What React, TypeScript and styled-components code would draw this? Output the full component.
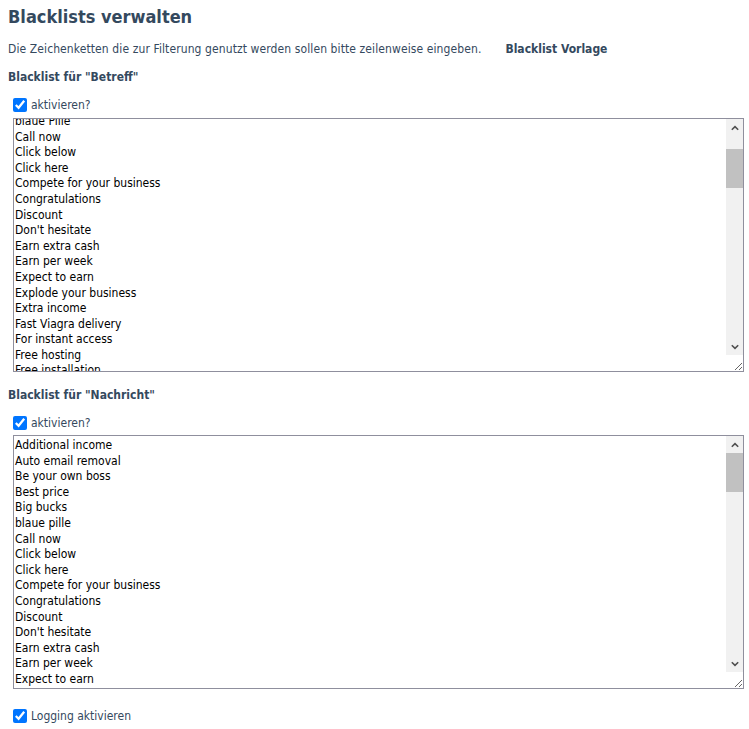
import { useLayoutEffect, useRef, useState } from "react";
import styled, { createGlobalStyle } from "styled-components";

const base = [
  "Additional income",
  "Auto email removal",
  "Be your own boss",
  "Best price",
  "Big bucks",
];

const rest = [
  "Call now",
  "Click below",
  "Click here",
  "Compete for your business",
  "Congratulations",
  "Discount",
  "Don't hesitate",
  "Earn extra cash",
  "Earn per week",
  "Expect to earn",
  "Explode your business",
  "Extra income",
  "Fast Viagra delivery",
  "For instant access",
  "Free hosting",
  "Free installation",
  "Free investment",
  "Free membership",
  "Free money",
  "Free offer",
  "Free preview",
  "Free quote",
  "Free sample",
  "Free trial",
  "Full refund",
  "Get it now",
  "Get out of debt",
  "Get paid",
  "Gift certificate",
  "Great offer",
  "Guaranteed",
  "Hidden assets",
  "Home based",
  "Increase sales",
  "Increase traffic",
  "Incredible deal",
  "Info you requested",
  "Investment",
  "Join millions",
  "Limited time",
  "Lose weight",
  "Lower interest rate",
  "Lowest price",
  "Luxury car",
  "Make money",
  "Million dollars",
  "Miracle",
  "Money back",
  "No catch",
  "No cost",
  "No credit check",
  "No fees",
  "No gimmick",
  "No hidden costs",
  "Offer expires",
  "Once in a lifetime",
  "One time",
  "Online pharmacy",
  "Only $",
  "Order now",
  "Please read",
  "Potenzmittel",
  "Prize",
  "Pure profit",
  "Risk-free",
  "Satisfaction guaranteed",
  "Save big money",
  "Special promotion",
  "This is not spam",
  "Unsecured credit",
  "Urgent",
  "Viagra",
  "What are you waiting for",
  "Winner",
  "Work from home",
  "You have been selected",
  "You're a winner",
];

const subjectList = [...base, "blaue Pille", ...rest].join("\n");
const messageList = [...base, "blaue pille", ...rest].join("\n");

const GlobalStyle = createGlobalStyle`
  body {
    margin: 0;
    background: #ffffff;
    font-family: Tahoma, "DejaVu Sans Condensed", "DejaVu Sans", sans-serif;
    color: #34495e;
  }
`;

const Page = styled.div`
  padding: 6px 8px 10px 8px;
  display: flex;
  flex-direction: column;
`;

const Title = styled.h1`
  margin: 0;
  font-size: 18px;
  line-height: 22px;
  font-weight: bold;
  color: #34495e;
`;

const IntroRow = styled.div`
  display: flex;
  align-items: center;
  margin-top: 13px;
  font-size: 12px;
  line-height: 16px;

  > span:first-child {
    letter-spacing: 0.1px;
  }
`;

const TemplateLink = styled.span`
  margin-left: 24px;
  font-weight: bold;
`;

const SectionLabel = styled.div<{ $gap: number }>`
  margin-top: ${(p) => p.$gap}px;
  font-size: 12px;
  line-height: 16px;
  font-weight: bold;
`;

const CheckRow = styled.label<{ $gap: number }>`
  display: flex;
  align-items: center;
  gap: 4px;
  margin-top: ${(p) => p.$gap}px;
  padding-left: 5px;
  font-size: 12px;
  line-height: 16px;

  > input {
    margin: 0;
    width: 14px;
    height: 14px;
  }
`;

const ListBox = styled.div<{ $gap: number }>`
  position: relative;
  margin: ${(p) => p.$gap}px 0 0 5px;
  width: 731px;
  height: 254px;
`;

const ListArea = styled.textarea`
  display: block;
  box-sizing: border-box;
  margin: 0;
  width: 100%;
  height: 100%;
  padding: 2px 18px 2px 1px;
  border: 1px solid #8f8f9d;
  border-radius: 0;
  font-family: Tahoma, "DejaVu Sans Condensed", "DejaVu Sans", sans-serif;
  font-size: 12px;
  line-height: 15.6px;
  color: #000000;
  white-space: pre;
  overflow-y: scroll;
  overflow-x: hidden;
  scrollbar-width: none;
  outline: none;
`;

// hand-drawn scrollbar, lies over the textarea's right edge
const Rail = styled.div`
  position: absolute;
  top: 1px;
  right: 1px;
  bottom: 17px;
  width: 17px;
  background: #f1f1f1;
  display: flex;
  flex-direction: column;
`;

const RailButton = styled.div`
  flex: 0 0 17px;
  display: flex;
  align-items: center;
  justify-content: center;
`;

const Track = styled.div`
  position: relative;
  flex: 1;
`;

const Thumb = styled.div`
  position: absolute;
  left: 0;
  right: 0;
  background: #c1c1c1;
`;

const Chevron = ({ up }: { up?: boolean }) => (
  <svg width="8" height="6" viewBox="0 0 8 6">
    <path
      d={up ? "M0.8 4.8 L4 1.6 L7.2 4.8" : "M0.8 1.2 L4 4.4 L7.2 1.2"}
      fill="none"
      stroke="#505050"
      strokeWidth="1.6"
    />
  </svg>
);

const ScrollList = ({ text, gap, start = 0 }: { text: string; gap: number; start?: number }) => {
  const areaRef = useRef<HTMLTextAreaElement>(null);
  const trackRef = useRef<HTMLDivElement>(null);
  const [thumb, setThumb] = useState({ top: 0, height: 40 });

  const measure = () => {
    const area = areaRef.current;
    const track = trackRef.current;
    if (!area || !track) return;
    const trackH = track.clientHeight;
    const height = Math.max(20, Math.round((trackH * area.clientHeight) / area.scrollHeight));
    const range = area.scrollHeight - area.clientHeight;
    const top = range > 0 ? Math.round((area.scrollTop / range) * (trackH - height)) : 0;
    setThumb({ top, height });
  };

  useLayoutEffect(() => {
    if (areaRef.current) areaRef.current.scrollTop = start;
    measure();
  }, [start]);

  return (
    <ListBox $gap={gap}>
      <ListArea ref={areaRef} defaultValue={text} spellCheck={false} onScroll={measure} />
      <Rail>
        <RailButton>
          <Chevron up />
        </RailButton>
        <Track ref={trackRef}>
          <Thumb style={{ top: thumb.top, height: thumb.height }} />
        </Track>
        <RailButton>
          <Chevron />
        </RailButton>
      </Rail>
    </ListBox>
  );
};

export default function App() {
  return (
    <Page>
      <GlobalStyle />
      <Title>Blacklists verwalten</Title>
      <IntroRow>
        <span>
          Die Zeichenketten die zur Filterung genutzt werden sollen bitte zeilenweise eingeben.
        </span>
        <TemplateLink>Blacklist Vorlage</TemplateLink>
      </IntroRow>

      <SectionLabel $gap={12}>Blacklist für "Betreff"</SectionLabel>
      <CheckRow $gap={12}>
        <input type="checkbox" defaultChecked />
        aktivieren?
      </CheckRow>
      <ScrollList text={subjectList} gap={5} start={85} />

      <SectionLabel $gap={15}>Blacklist für "Nachricht"</SectionLabel>
      <CheckRow $gap={12}>
        <input type="checkbox" defaultChecked />
        aktivieren?
      </CheckRow>
      <ScrollList text={messageList} gap={4} />

      <CheckRow $gap={19}>
        <input type="checkbox" defaultChecked />
        Logging aktivieren
      </CheckRow>
    </Page>
  );
}
